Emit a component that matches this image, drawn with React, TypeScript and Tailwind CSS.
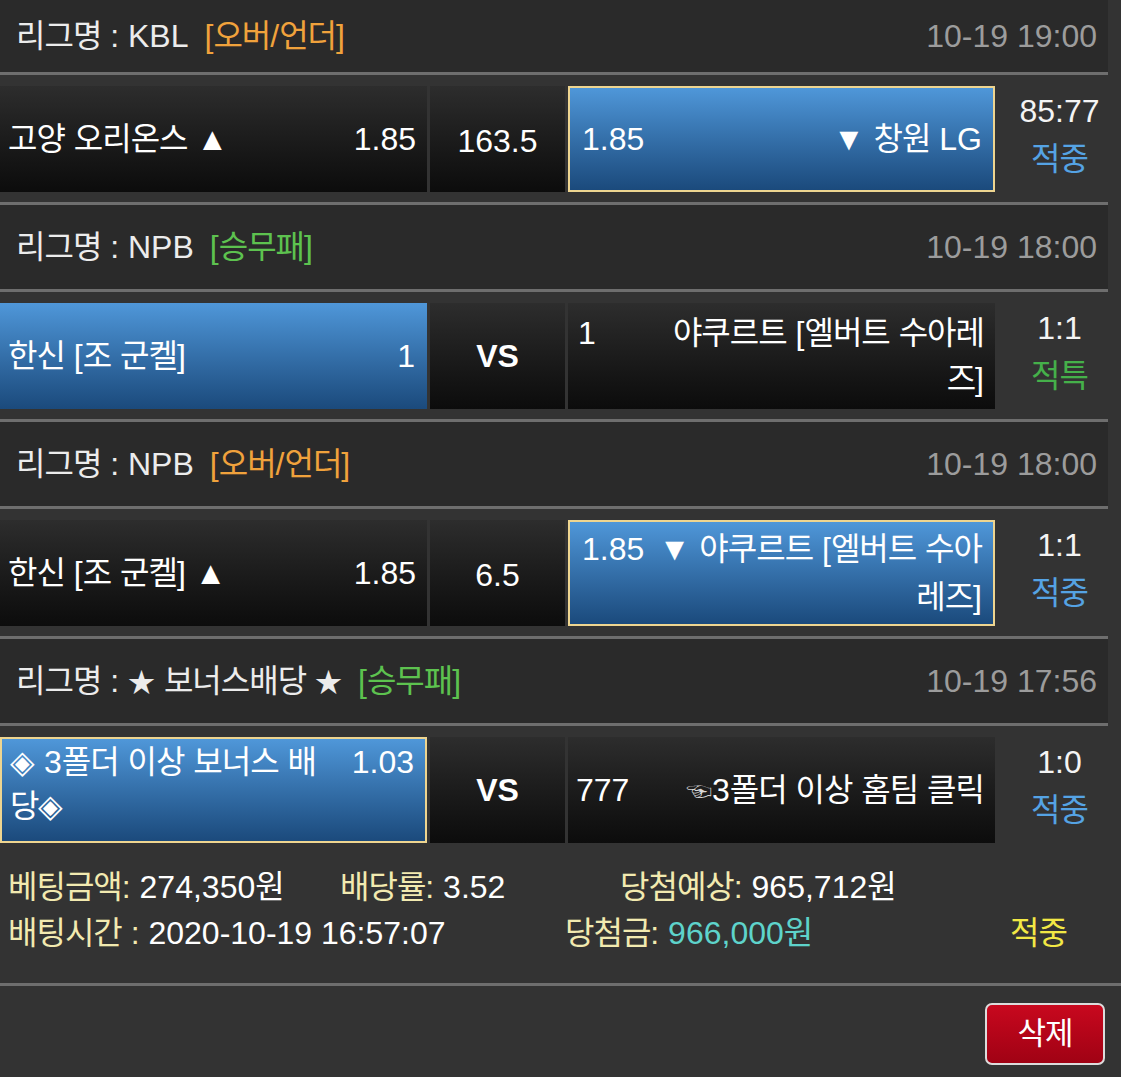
import React from "react";

const K = ({ s }: { s: string }) => {
  const parts = s.split(/([\uAC00-\uD7A3\u3131-\u318E]+|★)/);
  return (
    <>
      {parts.map((p, i) =>
        p === "★" ? (
          <span key={i} className="text-[27px]">
            {p}
          </span>
        ) : /[\uAC00-\uD7A3\u3131-\u318E]/.test(p) ? (
          <span key={i} className="tracking-[-1px]">
            {p}
          </span>
        ) : (
          <span key={i}>{p}</span>
        )
      )}
    </>
  );
};

const Sep = () => <div className="h-[3px] w-[1108px] bg-[#6e6e6e]" />;

function Header({
  h,
  league,
  tag,
  tagClass,
  date,
}: {
  h: string;
  league: string;
  tag: string;
  tagClass: string;
  date: string;
}) {
  return (
    <div className={`flex w-[1108px] items-center justify-between bg-[#2a2a2a] pl-[16px] pr-[11px] ${h}`}>
      <div className="whitespace-pre text-[#ececec]">
        <K s={league} />
        <span className={`ml-[16px] ${tagClass}`}>
          <K s={tag} />
        </span>
      </div>
      <div className="text-[#9c9c9c]">{date}</div>
    </div>
  );
}

const dark = "bg-linear-to-b from-[#2d2d2d] to-[#0c0c0c]";
const blue = "bg-linear-to-b from-[#4f97d9] to-[#1b4a7c]";
const sel = "bg-linear-to-b from-[#4f97d9] to-[#1b4a7c] border-2 border-[#eed590]";

function Result({ score, label, labelClass }: { score: string; label: string; labelClass: string }) {
  return (
    <div className="flex flex-1 flex-col items-center pt-[2px] leading-[46px]">
      <div className="text-[#f4f4f4]">{score}</div>
      <div className={`mt-[2px] ${labelClass}`}>
        <K s={label} />
      </div>
    </div>
  );
}

export default function App() {
  return (
    <div className="min-h-[1077px] w-[1121px] overflow-hidden bg-[#333333] font-['Liberation_Sans','Noto_Sans_CJK_KR',sans-serif] text-[32px] text-white">
      {/* Block 1 */}
      <Header h="h-[72px]" league="리그명 : KBL" tag="[오버/언더]" tagClass="text-[#f0a23c]" date="10-19 19:00" />
      <Sep />
      <div className="flex h-[127px] gap-[3px] pb-[10px] pt-[11px]">
        <div className={`flex w-[427px] items-center justify-between pl-[8px] pr-[11px] ${dark}`}>
          <span><K s="고양 오리온스 ▲" /></span>
          <span>1.85</span>
        </div>
        <div className={`flex w-[135px] items-center justify-center pt-[4px] ${dark}`}>163.5</div>
        <div className={`flex w-[427px] items-center justify-between pl-[12px] pr-[11px] ${sel}`}>
          <span>1.85</span>
          <span><K s="▼ 창원 LG" /></span>
        </div>
        <Result score="85:77" label="적중" labelClass="text-[#55a3e4]" />
      </div>
      <Sep />

      {/* Block 2 */}
      <Header h="h-[84px]" league="리그명 : NPB" tag="[승무패]" tagClass="text-[#5dc24f]" date="10-19 18:00" />
      <Sep />
      <div className="flex h-[127px] gap-[3px] pb-[10px] pt-[11px]">
        <div className={`flex w-[427px] items-center justify-between pl-[8px] pr-[12px] ${blue}`}>
          <span><K s="한신 [조 군켈]" /></span>
          <span>1</span>
        </div>
        <div className={`flex w-[135px] items-center justify-center font-bold ${dark}`}>VS</div>
        <div className={`flex w-[427px] flex-col justify-center pl-[10px] pr-[11px] leading-[46px] ${dark}`}>
          <div className="flex justify-between">
            <span>1</span>
            <span><K s="야쿠르트 [엘버트 수아레" /></span>
          </div>
          <div className="text-right"><K s="즈]" /></div>
        </div>
        <Result score="1:1" label="적특" labelClass="text-[#45b04a]" />
      </div>
      <Sep />

      {/* Block 3 */}
      <Header h="h-[84px]" league="리그명 : NPB" tag="[오버/언더]" tagClass="text-[#f0a23c]" date="10-19 18:00" />
      <Sep />
      <div className="flex h-[127px] gap-[3px] pb-[10px] pt-[11px]">
        <div className={`flex w-[427px] items-center justify-between pl-[8px] pr-[11px] ${dark}`}>
          <span><K s="한신 [조 군켈] ▲" /></span>
          <span>1.85</span>
        </div>
        <div className={`flex w-[135px] items-center justify-center pt-[4px] ${dark}`}>6.5</div>
        <div className={`flex w-[427px] flex-col justify-center pl-[12px] pr-[11px] leading-[48px] ${sel}`}>
          <div className="flex justify-between">
            <span>1.85</span>
            <span><K s="▼ 야쿠르트 [엘버트 수아" /></span>
          </div>
          <div className="text-right"><K s="레즈]" /></div>
        </div>
        <Result score="1:1" label="적중" labelClass="text-[#55a3e4]" />
      </div>
      <Sep />

      {/* Block 4 */}
      <Header h="h-[84px]" league="리그명 : ★ 보너스배당 ★" tag="[승무패]" tagClass="text-[#5dc24f]" date="10-19 17:56" />
      <Sep />
      <div className="flex h-[127px] gap-[3px] pb-[10px] pt-[11px]">
        <div className={`flex w-[427px] flex-col justify-start pl-[8px] pr-[11px] pt-[1px] leading-[44px] ${sel}`}>
          <div className="flex justify-between">
            <span><K s="◈ 3폴더 이상 보너스 배" /></span>
            <span>1.03</span>
          </div>
          <div><K s="당◈" /></div>
        </div>
        <div className={`flex w-[135px] items-center justify-center font-bold ${dark}`}>VS</div>
        <div className={`flex w-[427px] items-center justify-between pl-[8px] pr-[11px] ${dark}`}>
          <span>777</span>
          <span>
            <span className="text-[26px] text-[#d8d8d8]">☜</span>
            <K s="3폴더 이상 홈팀 클릭" />
          </span>
        </div>
        <Result score="1:0" label="적중" labelClass="text-[#55a3e4]" />
      </div>

      {/* Summary */}
      <div className="h-[130px] pl-[8px] pt-[11px] leading-[46px]">
        <div className="flex whitespace-pre">
          <span className="w-[332px]">
            <span className="text-[#f2eab0]"><K s="베팅금액:" /></span>
            <span> 274,350<K s="원" /></span>
          </span>
          <span className="w-[280px]">
            <span className="text-[#f2eab0]"><K s="배당률:" /></span>
            <span> 3.52</span>
          </span>
          <span>
            <span className="text-[#f2eab0]"><K s="당첨예상:" /></span>
            <span> 965,712<K s="원" /></span>
          </span>
        </div>
        <div className="flex whitespace-pre">
          <span className="w-[557px]">
            <span className="text-[#f2eab0]"><K s="배팅시간 :" /></span>
            <span> 2020-10-19 16:57:07</span>
          </span>
          <span className="w-[445px]">
            <span className="text-[#f2eab0]"><K s="당첨금:" /></span>
            <span className="text-[#5ed3cb]"> 966,000<K s="원" /></span>
          </span>
          <span className="text-[#f2e845]"><K s="적중" /></span>
        </div>
      </div>
      <div className="h-[3px] w-full bg-[#6e6e6e]" />

      <div className="flex justify-end pr-[16px] pt-[17px]">
        <button className="flex h-[62px] w-[120px] items-center justify-center rounded-[7px] border-2 border-[#dcdcdc] bg-linear-to-b from-[#c8081e] to-[#a00214] text-[31px] text-white">
          <K s="삭제" />
        </button>
      </div>
    </div>
  );
}
